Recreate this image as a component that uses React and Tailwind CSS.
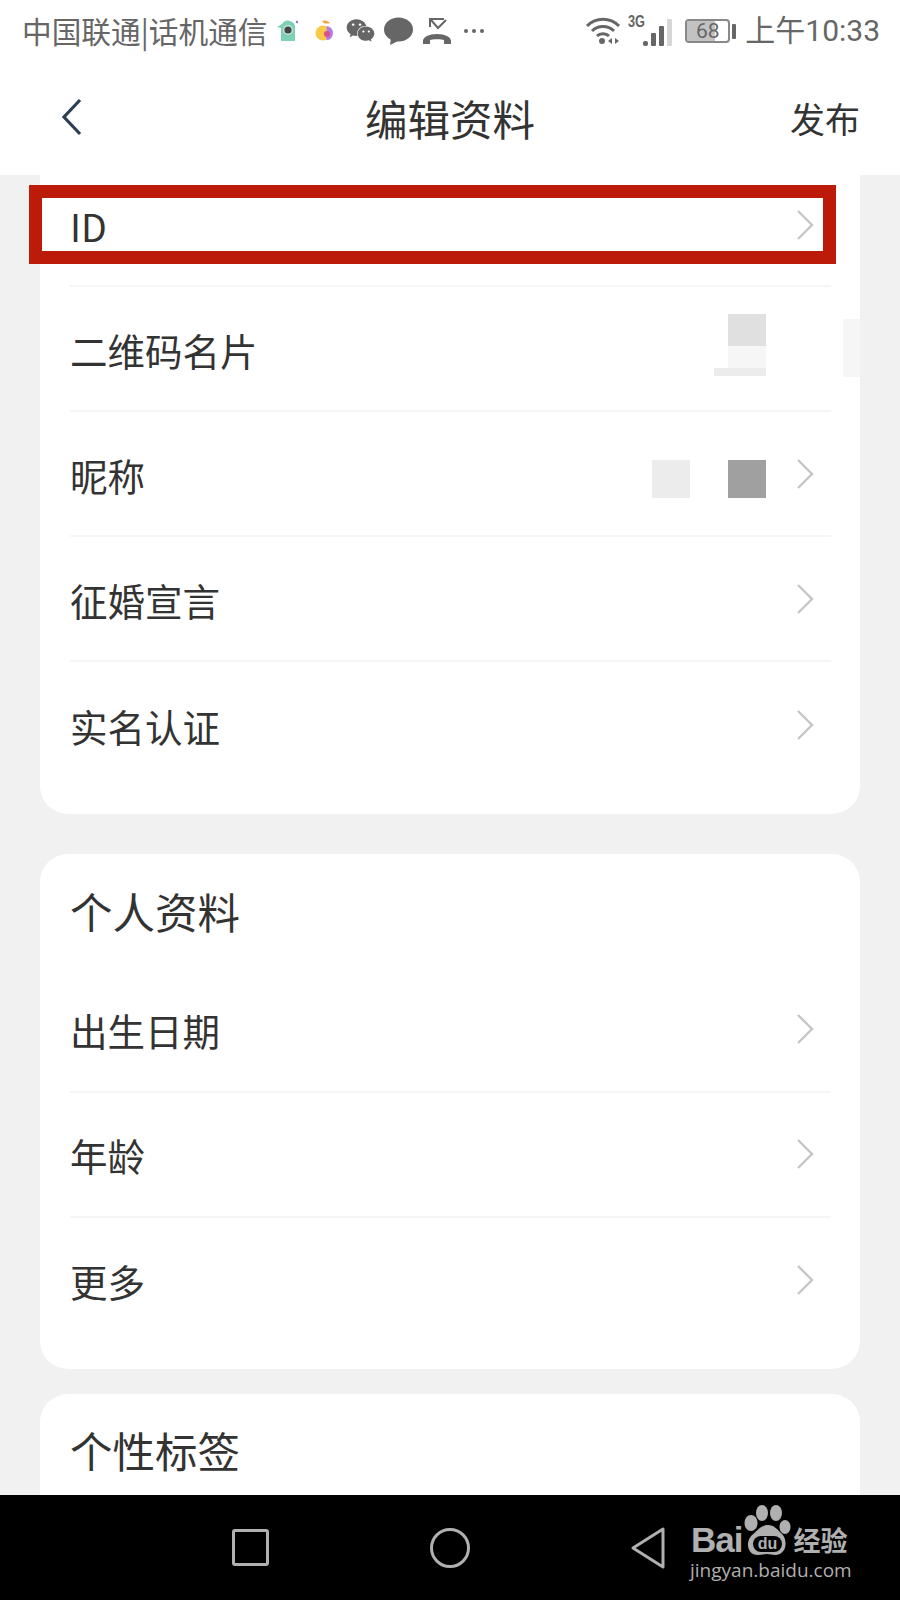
import { FaWeixin } from 'react-icons/fa'

const CJK = "font-['Noto_Sans_CJK_SC','Noto_Sans',sans-serif]"

function Chevron({ hidden = false }) {
  return (
    <svg width="18" height="32" viewBox="0 0 18 32" fill="none" className="-mt-[3px]">
      {!hidden && <path d="M2 2l14 14L2 30" stroke="#c6c6c6" strokeWidth="2.4" />}
    </svg>
  )
}

function Row({ label, divider = true, arrow = true, className = 'h-[125px] pt-[4px]', children }) {
  return (
    <div className={`flex items-center justify-between pr-[17px] ${divider ? 'border-b-2 border-[#f5f5f5]' : ''} ${className}`}>
      <span className="text-[37.5px] text-[#333]">{label}</span>
      <div className="flex items-center">
        {children}
        <Chevron hidden={!arrow} />
      </div>
    </div>
  )
}

function StatusIcons() {
  return (
    <div className="flex items-center ml-[8px]">
      {/* app icons */}
      <svg width="22" height="24" viewBox="0 0 22 24">
        <path d="M5 22V9L1 8l5-3a7 7 0 0 1 13 4v13z" fill="#7dcfb6" />
        <circle cx="12" cy="11" r="5" fill="#fff" opacity=".5" />
        <circle cx="12" cy="11" r="3.6" fill="#444" />
        <circle cx="21" cy="3" r="1.2" fill="#8a6fd0" />
      </svg>
      <svg width="22" height="24" viewBox="0 0 22 24" className="ml-[16px]">
        <path d="M8 2c3-1 6 0 8 2-3 1-6 1-8-2z" fill="#f2a33c" />
        <circle cx="9" cy="14" r="7.5" fill="#fbc94a" />
        <path d="M13 7a7 7 0 0 1 6 8c-1 4-3 6-6 6-2-2 0-5 0-7s-1-5 0-7z" fill="#b07ce8" />
        <circle cx="13" cy="15" r="3" fill="#d9508a" />
      </svg>
      <FaWeixin className="ml-[10px] text-[#666] text-[29px]" />
      <svg width="29" height="28" viewBox="0 0 29 28" className="ml-[9px]">
        <ellipse cx="14.5" cy="12.5" rx="14.5" ry="12" fill="#666" />
        <path d="M7 21l-1 7 8-4z" fill="#666" />
      </svg>
      <svg width="30" height="28" viewBox="0 0 30 28" fill="none" className="ml-[9px]">
        <path d="M8 10V2h14M9 3l7 8 8-8" stroke="#666" strokeWidth="2" />
        <path d="M1 27v-3c0-4 6-7 14-7s14 3 14 7v3h-7v-4c-2-1-12-1-14 0v4z" fill="#666" />
      </svg>
      <div className="ml-[12px] flex gap-[4px]">
        <span className="size-[4px] rounded-full bg-[#666]" />
        <span className="size-[4px] rounded-full bg-[#666]" />
        <span className="size-[4px] rounded-full bg-[#666]" />
      </div>
    </div>
  )
}

function SystemIcons() {
  return (
    <div className="flex items-center">
      <svg width="36" height="30" viewBox="0 0 36 30" fill="none">
        <path d="M2 10c9-9 23-9 32 0M7 15c6-6 16-6 22 0M12 20c3-3 9-3 12 0" stroke="#666" strokeWidth="3" />
        <circle cx="17" cy="25" r="3" fill="#666" />
        <path d="M27 22l-4 3 4 3zM30 22l4 3-4 3z" fill="#666" />
      </svg>
      <div className="ml-[7px] flex items-end h-[30px] relative w-[44px]">
        <span className="absolute left-0 -top-[3px] font-['Liberation_Sans'] font-bold text-[17px] leading-[18px] text-[#666] scale-x-75 origin-left">3G</span>
        <div className="flex items-end gap-[3px] ml-[15px]">
          <span className="w-[5px] h-[5px] bg-[#666] rounded-[2px]" />
          <span className="w-[5px] h-[13px] bg-[#666] rounded-[1px]" />
          <span className="w-[5px] h-[20px] bg-[#666] rounded-[1px]" />
          <span className="w-[5px] h-[27px] bg-[#d6d6d6] rounded-[1px]" />
        </div>
      </div>
      <div className="ml-[13px] flex items-center">
        <div className="relative w-[45px] h-[24px] border-2 border-[#888] rounded-[4px] overflow-hidden flex items-center justify-center">
          <div className="absolute left-0 inset-y-0 w-[68%] bg-[#c2c2c2]" />
          <span className="relative font-['Roboto'] text-[21px] leading-none text-[#666]">68</span>
        </div>
        <span className="ml-[2px] w-[4px] h-[15px] bg-[#666] rounded-[1px]" />
      </div>
      <span className="ml-[9px] text-[30px] leading-none text-[#666] font-['Roboto','Noto_Sans_CJK_SC',sans-serif]">上午10:33</span>
    </div>
  )
}

function BaiduLogo() {
  return (
    <div className="flex flex-col items-start text-[#b0b0b0]">
      <div className="flex items-end">
        <span className="font-['Liberation_Sans'] font-bold text-[35px] leading-[30px] tracking-[-1px]">Bai</span>
        <svg width="47" height="50" viewBox="0 0 47 50" className="mx-[2px]">
          <ellipse cx="7" cy="18" rx="6.5" ry="8" fill="#b0b0b0" />
          <ellipse cx="18" cy="8" rx="6" ry="8" fill="#b0b0b0" />
          <ellipse cx="32" cy="8" rx="6" ry="8" fill="#b0b0b0" />
          <ellipse cx="41" cy="22" rx="5.5" ry="7" fill="#b0b0b0" />
          <path d="M24 20c6 0 9 4 14 9 6 6 5 21-7 21-3 0-5-1-8-1s-6 1-9 1C3 50 1 37 8 30c6-5 9-10 16-10z" fill="#b0b0b0" />
          <rect x="9" y="31" width="29" height="16" rx="8" fill="#000" />
          <text x="23.5" y="44" textAnchor="middle" fontFamily="Liberation Sans" fontWeight="700" fontSize="16" fill="#b0b0b0">du</text>
        </svg>
        <span className="font-['Noto_Sans_CJK_SC'] font-bold text-[27px] leading-[30px]">经验</span>
      </div>
      <span className="font-['Open_Sans'] text-[19px] leading-[20px] mt-[5px] -ml-[1px]">jingyan.baidu.com</span>
    </div>
  )
}

export default function App() {
  return (
    <div className={`relative h-[1600px] w-[900px] overflow-hidden flex flex-col bg-[#f1f1f1] ${CJK}`}>
      <div className="h-[175px] shrink-0 bg-white">
        <div className="h-[62px] pl-[22px] pr-[20px] flex items-center justify-between">
          <div className="flex items-center">
            <span className="text-[29.7px] leading-none text-[#666]">中国联通|话机通信</span>
            <StatusIcons />
          </div>
          <SystemIcons />
        </div>
        <div className="h-[113px] relative flex items-center justify-center pb-[2px]">
          <svg width="24" height="40" viewBox="0 0 24 40" fill="none" className="absolute left-[60px] top-[35px]">
            <path d="M20 3L4 20l16 17" stroke="#2b3f55" strokeWidth="3.2" />
          </svg>
          <span className="text-[42.5px] text-[#333]">编辑资料</span>
          <span className="absolute right-[40px] top-[30px] text-[35px] text-[#333]">发布</span>
        </div>
      </div>

      <div className="flex-1 min-h-0 overflow-hidden px-[40px]">
        <div className="bg-white rounded-b-[28px] pl-[30px] pr-[29px] pb-[27px]">
          <Row label="ID" className="h-[112px] pb-[8px]" />
          <Row label="二维码名片" arrow={false}>
            <div className="mr-[30px] mb-[12px] w-[54px] flex flex-col items-end">
              <div className="w-[38px] h-[32px] bg-[#e0e0e0]" />
              <div className="w-[38px] h-[22px] bg-[#f6f6f6]" />
              <div className="w-[52px] h-[8px] bg-[#ececec]" />
            </div>
          </Row>
          <Row label="昵称">
            <div className="size-[38px] mt-[6px] bg-[#ececec]" />
            <div className="size-[38px] mt-[6px] bg-[#a0a0a0] ml-[38px] mr-[30px]" />
          </Row>
          <Row label="征婚宣言" />
          <Row label="实名认证" divider={false} />
        </div>

        <div className="mt-[40px] bg-white rounded-[28px] pl-[30px] pr-[29px] pb-[26px]">
          <div className="h-[122px] pb-[8px] flex items-center text-[42.5px] text-[#333]">个人资料</div>
          <Row label="出生日期" className="h-[117px] pb-[6px]" />
          <Row label="年龄" className="h-[125px] pt-[1px]" />
          <Row label="更多" divider={false} className="h-[125px] pt-[1px]" />
        </div>

        <div className="mt-[25px] bg-white rounded-t-[28px] pl-[30px] h-[200px]">
          <div className="h-[122px] pb-[10px] flex items-center text-[42.5px] text-[#333]">个性标签</div>
        </div>
      </div>

      <div className="relative h-[105px] shrink-0 bg-black flex items-center">
        <div className="w-[37px] h-[37px] ml-[232px] border-[3px] border-[#b0b0b0] rounded-[3px]" />
        <div className="w-[40px] h-[40px] ml-[161px] border-[3px] border-[#b0b0b0] rounded-full" />
        <svg width="36" height="42" viewBox="0 0 36 42" fill="none" className="ml-[160px]">
          <path d="M33 2v38L3 21z" stroke="#b0b0b0" strokeWidth="3" strokeLinejoin="round" />
        </svg>
        <div className="ml-[25px] -mt-[11px]">
          <BaiduLogo />
        </div>
      </div>

      {/* red annotation box drawn over the screenshot */}
      <div className="absolute left-[29px] top-[185px] w-[807px] h-[79px] border-[13px] border-[#bb1b08]" />
      {/* blurred block at the card edge */}
      <div className="absolute left-[843px] top-[319px] w-[17px] h-[58px] bg-[#f6f6f6]" />
    </div>
  )
}
